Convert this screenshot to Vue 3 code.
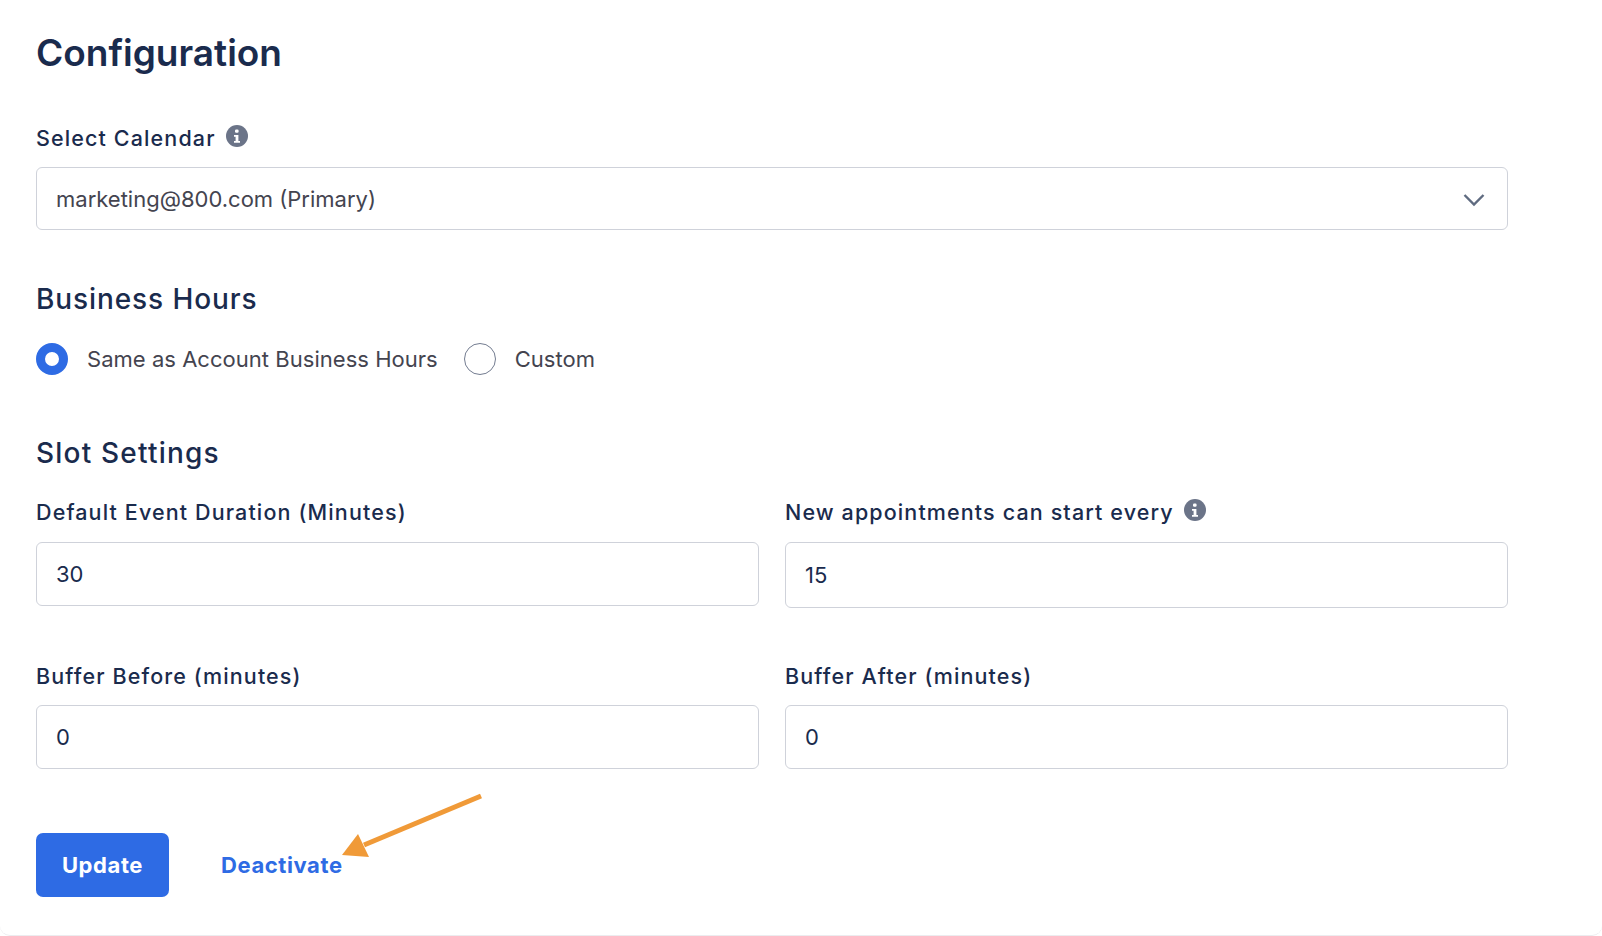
<script setup>
const rows = [
  [
    { label: 'Default Event Duration (Minutes)', value: '30', info: false, cls: 'h64' },
    { label: 'New appointments can start every', value: '15', info: true, cls: 'h66' }
  ],
  [
    { label: 'Buffer Before (minutes)', value: '0', info: false, cls: 'h64 tight' },
    { label: 'Buffer After (minutes)', value: '0', info: false, cls: 'h64 tight' }
  ]
]
</script>

<template>
  <main class="card">
    <h1 class="title">Configuration</h1>

    <div class="label sel-label">
      <span>Select Calendar</span>
      <svg class="info" viewBox="0 0 22 22"><circle cx="11" cy="11" r="11" fill="#6b7488" /><rect x="9" y="4.500" width="3.600" height="3.200" rx="1.200" fill="#fff" /><path d="M8 10h4.400v6H14v1.800H8V16h1.600v-4.200H8z" fill="#fff" /></svg>
    </div>
    <div class="box select">
      <span class="sel-text">marketing@800.com (Primary)</span>
      <svg class="chev" viewBox="0 0 22 14"><path d="M1.500 2 11 11.500 20.500 2" fill="none" stroke="#5f6b80" stroke-width="2.400" /></svg>
    </div>

    <h2 class="section hours">Business Hours</h2>
    <div class="radios">
      <span class="radio on"></span>
      <span class="radio-text">Same as Account Business Hours</span>
      <span class="radio"></span>
      <span class="radio-text">Custom</span>
    </div>

    <h2 class="section slots">Slot Settings</h2>
    <div class="grid">
      <template v-for="(row, i) in rows" :key="i">
        <div v-for="f in row" :key="f.label" class="field">
          <div class="label">
            <span>{{ f.label }}</span>
            <svg v-if="f.info" class="info" viewBox="0 0 22 22"><circle cx="11" cy="11" r="11" fill="#6b7488" /><rect x="9" y="4.500" width="3.600" height="3.200" rx="1.200" fill="#fff" /><path d="M8 10h4.400v6H14v1.800H8V16h1.600v-4.200H8z" fill="#fff" /></svg>
          </div>
          <div class="box num" :class="f.cls">{{ f.value }}</div>
        </div>
      </template>
    </div>

    <div class="actions">
      <button class="btn">Update</button>
      <a class="link">Deactivate</a>
      <svg class="arrow" viewBox="0 0 150 70"><path d="M139 6 22 55" stroke="#f09a38" stroke-width="5" fill="none" /><path d="M0 65 16 44 27 67z" fill="#f09a38" /></svg>
    </div>
  </main>
</template>

<style scoped>
.card {
  box-sizing: border-box;
  width: 1602px;
  height: 936px;
  padding: 28px 94px 0 36px;
  background: #fff;
  border-bottom: 1px solid #ececef;
  border-radius: 0 0 10px 10px;
  font-family: Inter, "Liberation Sans", sans-serif;
  overflow: hidden;
}
.title {
  margin: 0;
  font-size: 37px;
  line-height: 50px;
  font-weight: 600;
  color: #1a2b4d;
}
.label {
  display: flex;
  align-items: center;
  gap: 10px;
  height: 24px;
  font-size: 21.5px;
  font-weight: 500;
  letter-spacing: 1.12px;
  color: #1a2b4d;
}
.sel-label { margin-top: 48px; }
.info { width: 22px; height: 22px; position: relative; top: -2px; }
.box {
  box-sizing: border-box;
  display: flex;
  align-items: center;
  border: 1px solid #cfd2da;
  border-radius: 6px;
  padding: 0 19px;
  background: #fff;
  font-size: 22px;
}
.select {
  margin-top: 17px;
  height: 63px;
  justify-content: space-between;
  color: #44444f;
}
.chev { width: 22px; height: 14px; margin: 2px 3px 0 0; }
.section {
  margin: 0;
  font-size: 28px;
  line-height: 30px;
  font-weight: 500;
  letter-spacing: 0.9px;
  color: #1a2b4d;
}
.hours { margin-top: 54px; }
.radios {
  display: flex;
  align-items: center;
  margin-top: 29px;
  height: 32px;
  font-size: 22px;
  letter-spacing: 0.03px;
  color: #44444f;
}
.radio {
  box-sizing: border-box;
  width: 32px;
  height: 32px;
  border-radius: 50%;
  border: 1px solid #737c90;
}
.radio.on { border: 9px solid #2e6be4; }
.radio-text { margin-left: 19px; margin-right: 26px; }
.slots { margin-top: 63px; letter-spacing: 1.2px; }
.grid {
  display: grid;
  grid-template-columns: 1fr 1fr;
  column-gap: 26px;
  row-gap: 0;
  margin-top: 32px;
}
.field { height: 164px; }
.num { margin-top: 18px; color: #1a2b4d; }
.num.tight { margin-top: 17px; }
.h64 { height: 64px; }
.h66 { height: 66px; }
.actions {
  position: relative;
  display: flex;
  align-items: center;
  gap: 52px;
  margin-top: 5px;
}
.btn {
  width: 133px;
  height: 64px;
  border: 0;
  border-radius: 7px;
  background: #2e6be4;
  color: #fff;
  font: 700 22px Inter, "Liberation Sans", sans-serif;
  letter-spacing: 0.6px;
}
.link {
  color: #2e6be4;
  font-size: 22px;
  font-weight: 700;
  letter-spacing: 0.6px;
}
.arrow {
  position: absolute;
  left: 306px;
  top: -43px;
  width: 150px;
  height: 70px;
}
</style>
